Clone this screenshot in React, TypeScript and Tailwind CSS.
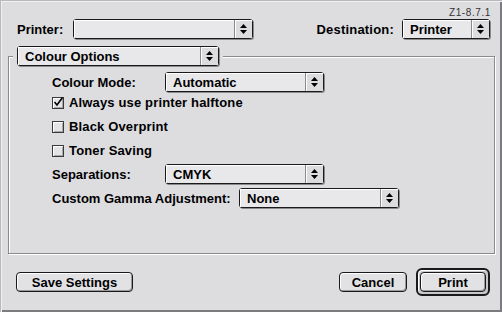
import React from "react";

const font = { fontFamily: '"Liberation Sans", Arial, sans-serif' };

function Arrows() {
  return (
    <svg width="7" height="10" viewBox="0 0 7 10" className="block">
      <path d="M3.5 0 L7 4 L0 4 Z" fill="#000" />
      <path d="M0 6 L7 6 L3.5 10 Z" fill="#000" />
    </svg>
  );
}

function Popup({ w, label, h = 20 }: { w: number; label?: string; h?: number }) {
  return (
    <div
      className="flex shrink-0 rounded-[3px] border border-[#1a1a1a] bg-[#e8e8ea] shadow-[1px_1px_0_#8a8a8a]"
      style={{ width: w, height: h }}
    >
      <div className="flex flex-1 items-center pl-[7px] text-[13px] font-bold leading-none text-black shadow-[inset_1px_1px_0_#ffffff]">
        {label}
      </div>
      <div className="flex w-[18px] items-center justify-center border-l border-[#8a8a8a] bg-[#dcdcdf] shadow-[inset_1px_1px_0_#ffffff]">
        <Arrows />
      </div>
    </div>
  );
}

function Check({ checked, label }: { checked?: boolean; label: string }) {
  return (
    <div className="flex h-[12px] items-center gap-[5px]">
      <div className="relative h-[12px] w-[12px] border border-[#3a3a3a] bg-[#e4e4e6] shadow-[inset_1px_1px_0_#ffffff,inset_-1px_-1px_0_#a8a8a8]">
        {checked && (
          <svg width="12" height="12" viewBox="0 0 12 12" className="absolute left-[-1px] top-[-2px]">
            <path d="M2.5 6 L5 9 L10.5 1.5" stroke="#000" strokeWidth="1.6" fill="none" />
          </svg>
        )}
      </div>
      <span className="text-[13px] font-bold leading-[12px] tracking-[0.15px] text-black">{label}</span>
    </div>
  );
}

function Button({ w, label }: { w: number; label: string }) {
  return (
    <div
      className="flex h-[20px] items-center justify-center rounded-[4px] border border-[#1a1a1a] bg-[#e2e2e5] text-[13px] font-bold leading-none text-black shadow-[inset_1px_1px_0_#ffffff,inset_-1px_-1px_0_#9a9a9a]"
      style={{ width: w }}
    >
      {label}
    </div>
  );
}

export default function App() {
  return (
    <div
      className="relative h-[312px] w-[502px] overflow-hidden border-t border-l border-[#b8b8bc] bg-[#dddde0] shadow-[inset_1px_1px_0_#f0f0f2,inset_-2px_-2px_0_#7c7c80]"
      style={font}
    >
      <div className="flex h-[18px] justify-end pr-[11px] pt-[7px] text-[10px] leading-none tracking-[0.6px] text-[#333]">
        Z1-8.7.1
      </div>
      <div className="flex h-[20px] items-center pl-[16px] pr-[12px]">
        <span className="w-[56px] text-[13px] font-bold leading-none">Printer:</span>
        <Popup w={180} />
        <span className="ml-auto mr-[8px] text-[13px] font-bold leading-none tracking-[0.2px]">Destination:</span>
        <Popup w={88} label="Printer" />
      </div>

      <div className="relative ml-[7px] mt-[17px] h-[198px] w-[487px] border border-[#8a8a8e] shadow-[1px_1px_0_#ffffff,inset_1px_1px_0_#ffffff]">
        <div className="absolute left-[4px] top-[-11px] bg-[#dddde0] px-[4px]">
          <Popup w={202} label="Colour Options" />
        </div>
        <div className="flex flex-col pl-[43px] pt-[15px]">
          <div className="flex h-[20px] items-center">
            <span className="w-[113px] text-[13px] font-bold leading-none">Colour Mode:</span>
            <Popup w={159} label="Automatic" />
          </div>
          <div className="mt-[5px] flex flex-col gap-[12px]">
            <Check checked label="Always use printer halftone" />
            <Check label="Black Overprint" />
            <Check label="Toner Saving" />
          </div>
          <div className="mt-[7px] flex h-[20px] items-center">
            <span className="w-[113px] text-[13px] font-bold leading-none">Separations:</span>
            <Popup w={159} label="CMYK" />
          </div>
          <div className="mt-[4px] flex h-[20px] items-center">
            <span className="w-[187px] text-[13px] font-bold leading-none">Custom Gamma Adjustment:</span>
            <Popup w={160} label="None" />
          </div>
        </div>
      </div>

      <div className="mt-[14px] flex items-center pl-[15px] pr-[12px]">
        <Button w={117} label="Save Settings" />
        <div className="ml-auto">
          <Button w={68} label="Cancel" />
        </div>
        <div className="ml-[9px] rounded-[6px] border-2 border-[#1a1a1a] bg-[#c8c8cc] p-[2px] shadow-[inset_1px_1px_0_#ffffff]">
          <Button w={66} label="Print" />
        </div>
      </div>
    </div>
  );
}
